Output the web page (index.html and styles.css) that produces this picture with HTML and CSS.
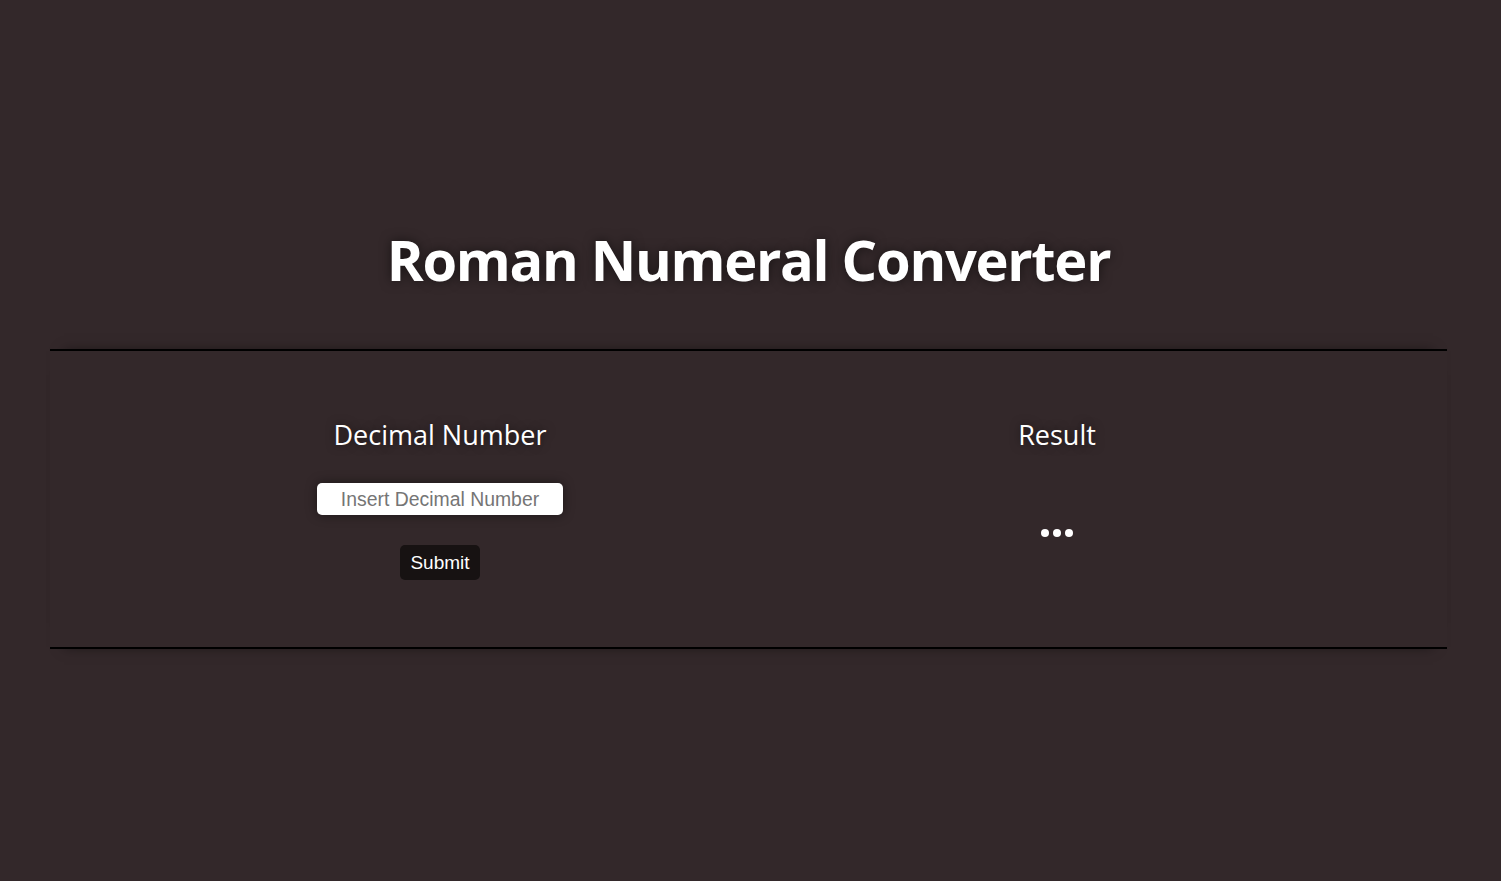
FILE: index.html
```html
<!DOCTYPE html>
<html lang="en">
<head>
<meta charset="utf-8">
<title>Roman Numeral Converter</title>
<link rel="stylesheet" href="styles.css">
</head>
<body>
  <header class="header">
    <h1 class="title">Roman Numeral Converter</h1>
  </header>
  <main class="converter">
    <section class="column">
      <h2 class="column-title">Decimal Number</h2>
      <input class="number-input" type="text" placeholder="Insert Decimal Number">
      <button class="submit-btn" type="button">Submit</button>
    </section>
    <section class="column">
      <h2 class="column-title">Result</h2>
      <div class="result"><span class="dot"></span><span class="dot"></span><span class="dot"></span></div>
    </section>
  </main>
</body>
</html>
```
FILE: styles.css
```css
html, body {
  margin: 0;
  padding: 0;
}
body {
  background: #33282a;
  color: #ffffff;
  font-family: "Open Sans", "Noto Sans", sans-serif;
  height: 881px;
  overflow: hidden;
}
.header {
  display: flex;
  justify-content: center;
  padding: 219px 4px 0 0;
  height: 130px;
}
.title {
  margin: 0;
  font-size: 56px;
  font-weight: 700;
  line-height: 80px;
  letter-spacing: -1.3px;
  text-shadow: 0 0 12px rgba(0, 0, 0, 0.55);
}
.converter {
  margin: 0 54px 0 50px;
  border-top: 2px solid #000;
  border-bottom: 2px solid #000;
  box-shadow: 0 -12px 12px -14px rgba(0,0,0,0.5), 0 12px 12px -14px rgba(0,0,0,0.5);
  height: 296px;
  display: flex;
  justify-content: center;
  gap: 317px;
}
.column {
  width: 300px;
  display: flex;
  flex-direction: column;
  align-items: center;
  padding-top: 64px;
}
.column-title {
  margin: 0;
  font-size: 27px;
  font-weight: 400;
  line-height: 40px;
  text-shadow: 0 0 10px rgba(0, 0, 0, 0.5);
}
.number-input {
  margin-top: 28px;
  width: 246px;
  height: 32px;
  box-sizing: border-box;
  border: none;
  border-radius: 5px;
  background: #fff;
  font-family: "Liberation Sans", Arial, sans-serif;
  font-size: 19.4px;
  text-align: center;
  color: #222;
  box-shadow: 0 0 12px rgba(0, 0, 0, 0.45);
  outline: none;
}
.number-input::placeholder {
  color: #757575;
}
.submit-btn {
  margin-top: 30px;
  height: 35px;
  padding: 0 10px;
  border: none;
  border-radius: 5px;
  background: #171212;
  color: #fff;
  font-family: "Liberation Sans", Arial, sans-serif;
  font-size: 19px;
}
.result {
  margin-top: 74px;
  display: flex;
  gap: 4px;
}
.dot {
  width: 8px;
  height: 8px;
  border-radius: 50%;
  background: #fff;
}
```
